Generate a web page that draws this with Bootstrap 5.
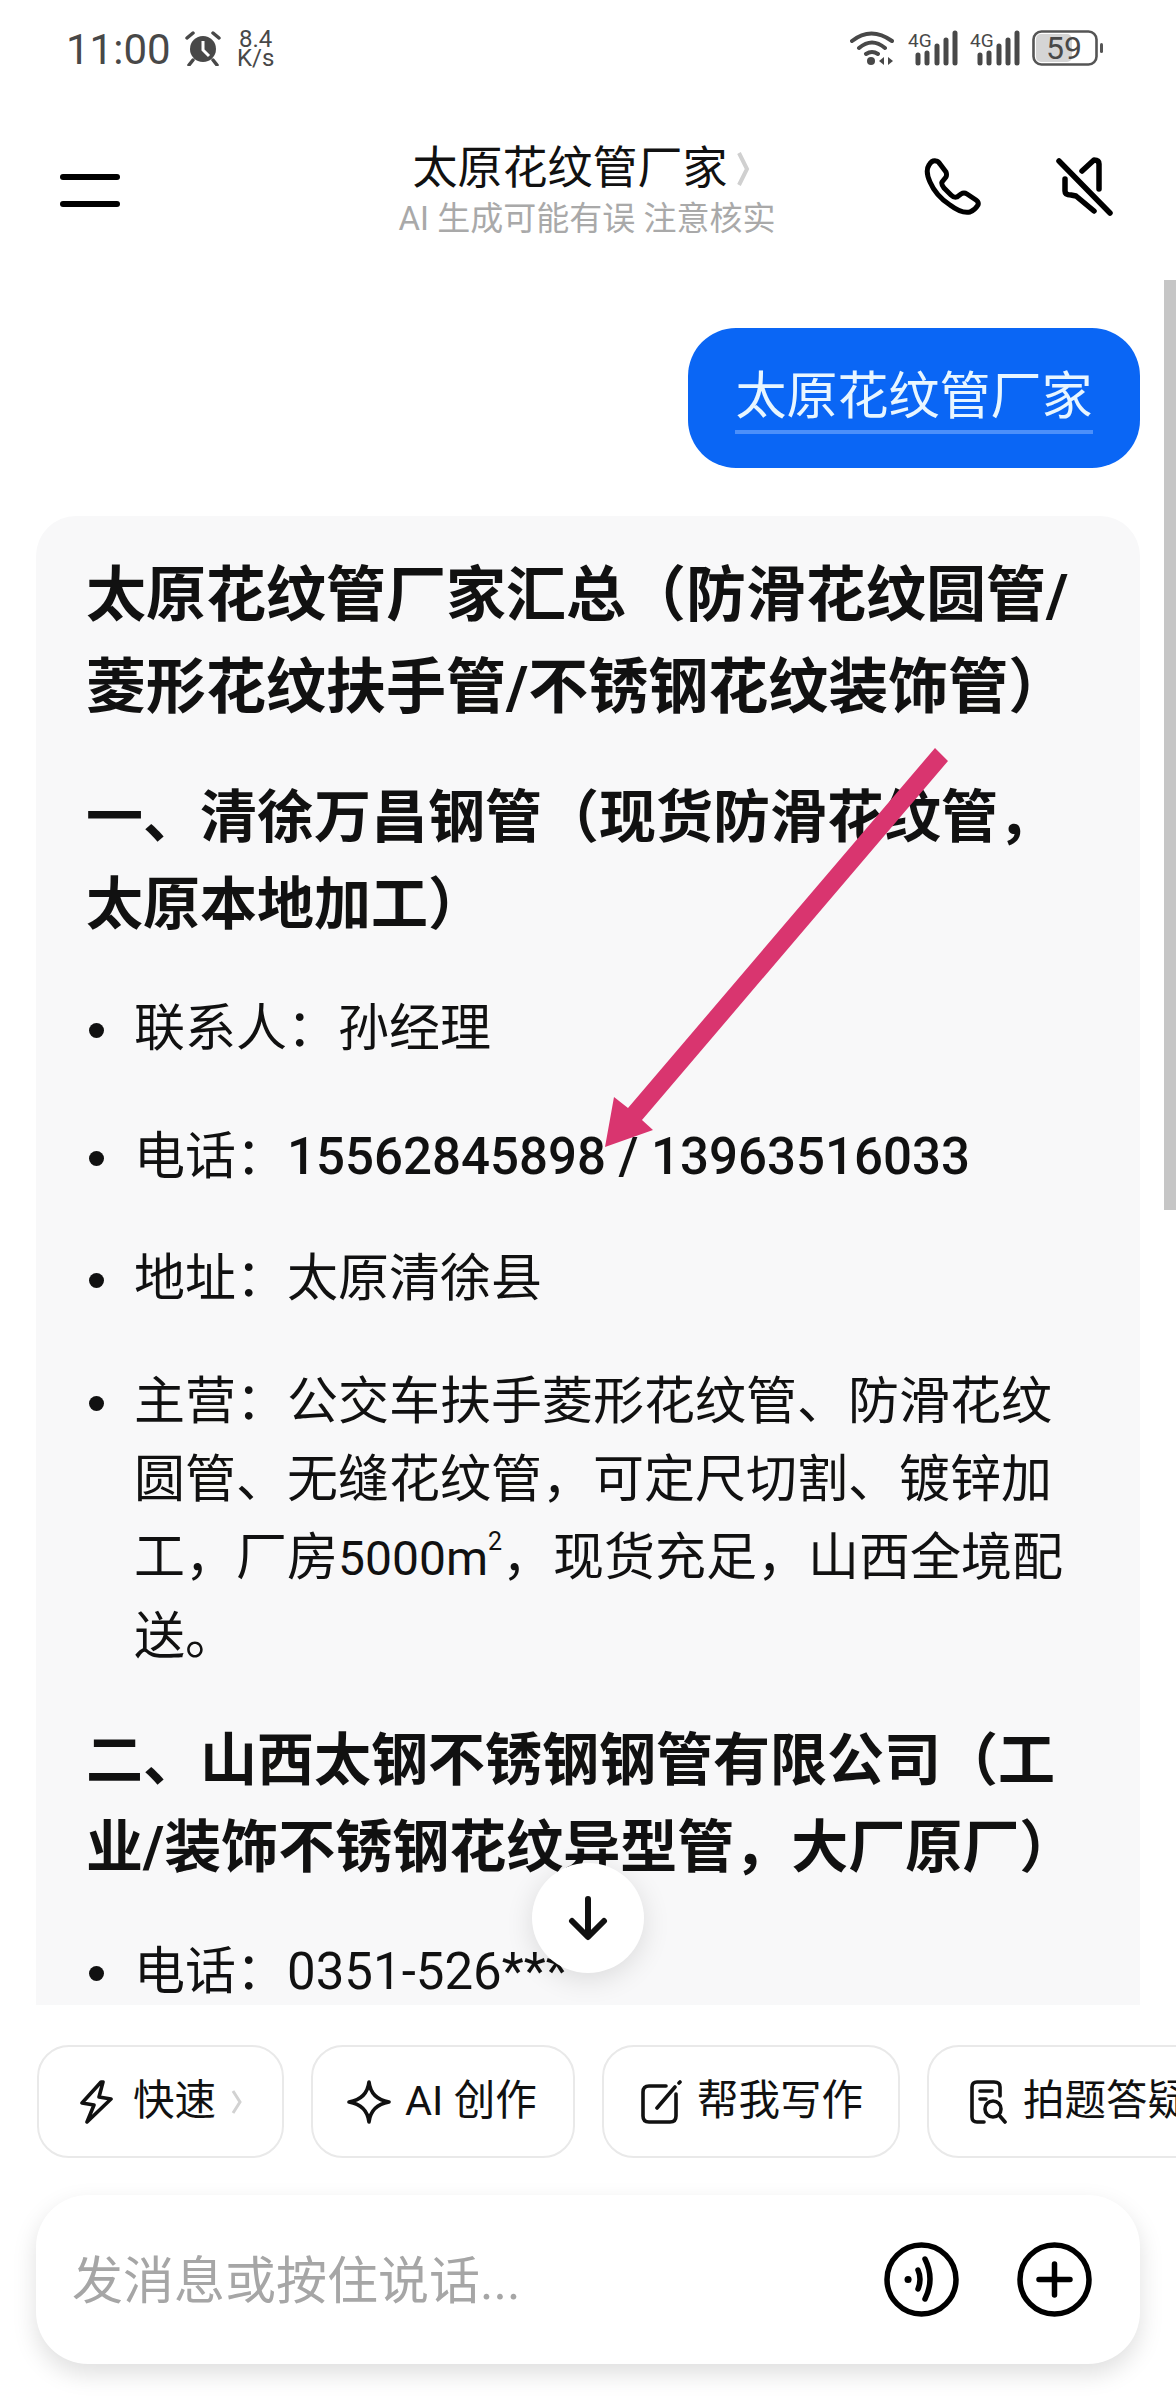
<!DOCTYPE html>
<html lang="zh-CN">
<head>
  <meta charset="UTF-8">
  <meta name="viewport" content="width=device-width, initial-scale=1.0">
  <title>太原花纹管厂家</title>
  <link rel="stylesheet" href="https://cdn.jsdelivr.net/npm/bootstrap@5.3.0/dist/css/bootstrap.min.css">
  <style>
    body {
      width: 1176px;
      height: 2400px;
      overflow: hidden;
      background: #fff;
      color: #111;
      font-family: Roboto, "Noto Sans CJK SC", sans-serif;
    }
    .status-row {
      height: 70px;
      padding: 30px 72px 0 66px;
      color: #484848;
    }
    .status-time {
      font-size: 42px;
      line-height: 40px;
      width: 119px;
    }
    .status-speed {
      font-size: 24px;
      line-height: 19px;
      margin-left: 16px;
    }
    .status-icons { gap: 12px; }
    .top-bar {
      height: 210px;
      padding: 22px 62px 0 60px;
    }
    .top-side { flex: 1 1 0; }
    .burger { width: 60px; gap: 21px; margin-top: 8px; }
    .burger i { display: block; height: 6px; border-radius: 3px; background: #000; }
    .top-text { margin-top: 6px; }
    .top-title { font-size: 45px; line-height: 60px; padding-right: 12px; }
    .top-note { font-size: 33px; line-height: 40px; color: #a9a9a9; }
    .chat-area {
      height: 1725px;
      padding: 48px 36px 0;
    }
    .scroll-thumb {
      position: absolute;
      top: 0;
      right: 0;
      width: 12px;
      height: 930px;
      background: #c6c6c6;
    }
    .user-bubble {
      width: 452px;
      height: 140px;
      margin-bottom: 48px;
      border-radius: 48px;
      background: #0a66f5;
      color: #e8f6ff;
      font-size: 51px;
    }
    .user-bubble span {
      margin-top: 3px;
      padding-bottom: 2px;
      line-height: 62px;
      border-bottom: 4px solid #4c90fa;
    }
    .answer-card {
      padding: 34px 50px 0;
      border-radius: 40px 40px 0 0;
      background: #f8f8f9;
    }
    .answer-card h1 {
      margin: 0 0 40px;
      font-size: 60px;
      line-height: 92px;
      font-weight: 700;
    }
    .answer-card h2 {
      margin: 0 0 42px;
      font-size: 57px;
      line-height: 87px;
      font-weight: 700;
    }
    .answer-card ul {
      margin: 0 0 41px;
      padding-left: 48px;
      list-style: none;
      font-size: 51px;
      line-height: 78px;
    }
    .answer-card li { position: relative; }
    .answer-card li::before {
      content: "";
      position: absolute;
      left: -45px;
      top: 33px;
      width: 15px;
      height: 15px;
      border-radius: 50%;
      background: #111;
    }
    .answer-card li + li { margin-top: 45px; }
    .answer-card li.phone-item { margin-top: 50px; }
    .answer-card li.phone-item + li { margin-top: 44px; }
    .phone-num { font-weight: 500; }
    .area-num { font-size: 48px; }
    .small-sup { font-size: 25px; top: -1em; }
    .mark-arrow {
      position: absolute;
      left: 600px;
      top: 745px;
      width: 355px;
      height: 405px;
    }
    .scroll-down {
      position: absolute;
      left: 532px;
      top: 1863px;
      width: 112px;
      height: 110px;
      box-shadow: 0 6px 28px rgba(0, 0, 0, .12);
    }
    .chip-row {
      height: 113px;
      margin-top: 40px;
      padding-left: 37px;
      gap: 27px;
    }
    .chip-btn {
      flex: none;
      height: 113px;
      border: 2px solid #e9e9e9;
      border-radius: 32px;
      background: #fff;
      font-size: 41.5px;
      white-space: nowrap;
    }
    .chip-fast { width: 247px; padding-left: 41px; gap: 20px; }
    .chip-fast svg:last-child { margin-left: -5px; }
    .chip-ai { width: 264px; padding-left: 34px; gap: 14px; }
    .chip-write { width: 298px; padding-left: 37px; gap: 14px; }
    .chip-photo { width: 330px; padding-left: 41px; gap: 15px; }
    .input-box {
      width: 1104px;
      height: 169px;
      margin: 37px 0 0 36px;
      padding: 0 48px 0 36px;
      border-radius: 52px;
      background: #fff;
      box-shadow: 0 10px 24px rgba(0, 0, 0, .13);
    }
    .input-hint { margin-top: 6px; font-size: 51px; color: #a6a6a6; }
    .input-icons { gap: 58px; }
  </style>
</head>
<body class="position-relative">

  <div class="status-row d-flex justify-content-between align-items-start">
    <div class="d-flex align-items-start">
      <span class="status-time">11:00</span>
      <svg width="36" height="36" viewBox="0 0 36 36">
        <circle cx="18" cy="19" r="13" fill="#484848"/>
        <path d="M18 11v9l6 6" stroke="#fff" stroke-width="3" fill="none"/>
        <path d="M2 8l6-5M34 8l-6-5M8 30l-4 5M28 30l4 5" stroke="#484848" stroke-width="3.5" stroke-linecap="round"/>
      </svg>
      <span class="status-speed text-center">8.4<br>K/s</span>
    </div>
    <div class="status-icons d-flex align-items-start">
      <svg width="46" height="36" viewBox="0 0 46 36" fill="none" stroke="#484848" stroke-width="4" stroke-linecap="round">
        <path d="M2 11Q21 -4 42 11M9 18Q22 7 35 18M16 24Q22 20 28 24"/>
        <circle cx="21" cy="31" r="4" fill="#484848" stroke="none"/>
        <path d="M34 27l-5 4 5 4zM38 27l5 4-5 4z" fill="#484848" stroke="none"/>
      </svg>
      <svg width="50" height="36" viewBox="0 0 50 36">
        <text x="0" y="17" font-family="Roboto, sans-serif" font-size="19" fill="#484848">4G</text>
        <path d="M10 25v8M19 23v10M29 16v17M38 10v23M47 3v30" stroke="#484848" stroke-width="5" stroke-linecap="round"/>
      </svg>
      <svg width="50" height="36" viewBox="0 0 50 36">
        <text x="0" y="17" font-family="Roboto, sans-serif" font-size="19" fill="#484848">4G</text>
        <path d="M10 25v8M19 23v10M29 16v17M38 10v23M47 3v30" stroke="#484848" stroke-width="5" stroke-linecap="round"/>
      </svg>
      <svg width="72" height="40" viewBox="0 0 72 40">
        <rect x="4" y="4" width="36" height="28" rx="5" fill="#d5d5d5"/>
        <rect x="1.5" y="1.5" width="63" height="33" rx="8" fill="none" stroke="#555" stroke-width="2.6"/>
        <text x="32" y="29" text-anchor="middle" font-family="Roboto, sans-serif" font-size="32" fill="#484848">59</text>
        <rect x="68" y="13" width="3" height="10" rx="1.5" fill="#555"/>
      </svg>
    </div>
  </div>

  <div class="top-bar d-flex align-items-center">
    <div class="top-side">
      <div class="burger d-flex flex-column"><i></i><i></i></div>
    </div>
    <div class="top-text text-center">
      <div class="top-title d-flex align-items-center justify-content-center gap-2">
        <span>太原花纹管厂家</span>
        <svg width="14" height="36" viewBox="0 0 14 36" fill="none" stroke="#d0d0d0" stroke-width="4"><path d="M3 2l8 16-8 16"/></svg>
      </div>
      <div class="top-note">AI 生成可能有误 注意核实</div>
    </div>
    <div class="top-side d-flex justify-content-end align-items-center">
      <svg class="me-5" width="58" height="58" viewBox="0 0 58 58" fill="none" stroke="#000" stroke-width="5" stroke-linejoin="round">
        <path d="M12 4Q8 3 5 8Q1 14 6 25Q12 39 26 48Q38 57 46 55Q51 53 54 48Q55 45 52 43L43 37Q40 35 37 37L33 40Q30 41 27 38L20 31Q17 27 18 25L22 20Q23 18 22 15L16 7Q14 4 12 4Z"/>
      </svg>
      <svg class="ms-4" width="60" height="60" viewBox="0 0 60 60" fill="none" stroke="#000" stroke-width="5.5" stroke-linecap="round" stroke-linejoin="round">
        <path d="M5 5L56 57M28 15L40 4Q45 4 45 8V33M11 23V35Q11 39 17 39L22 40L40 55"/>
      </svg>
    </div>
  </div>

  <div class="chat-area position-relative overflow-hidden">
    <div class="scroll-thumb"></div>
    <div class="d-flex justify-content-end">
      <div class="user-bubble d-flex align-items-center justify-content-center"><span>太原花纹管厂家</span></div>
    </div>
    <div class="answer-card">
      <h1>太原花纹管厂家汇总（防滑花纹圆管/菱形花纹扶手管/不锈钢花纹装饰管）</h1>
      <h2>一、清徐万昌钢管（现货防滑花纹管，太原本地加工）</h2>
      <ul>
        <li>联系人：孙经理</li>
        <li class="phone-item">电话：<span class="phone-num">15562845898 / 13963516033</span></li>
        <li>地址：太原清徐县</li>
        <li>主营：公交车扶手菱形花纹管、防滑花纹圆管、无缝花纹管，可定尺切割、镀锌加工，厂房<span class="area-num">5000m</span><sup class="small-sup">2</sup>，现货充足，山西全境配送。</li>
      </ul>
      <h2>二、山西太钢不锈钢钢管有限公司（工业/装饰不锈钢花纹异型管，大厂原厂）</h2>
      <ul>
        <li>电话：0351-526***</li>
      </ul>
    </div>
  </div>

  <svg class="mark-arrow" viewBox="600 745 355 405">
    <polygon points="935,748 948,761 642,1120 653,1130 605,1147 614,1097 628,1108" fill="#d9356f"/>
  </svg>

  <div class="scroll-down rounded-circle bg-white d-flex align-items-center justify-content-center">
    <svg width="40" height="46" viewBox="0 0 40 46" fill="none" stroke="#111" stroke-width="6" stroke-linecap="round" stroke-linejoin="round">
      <path d="M20 4V41M4 26L20 42L36 26"/>
    </svg>
  </div>

  <div class="chip-row d-flex overflow-hidden">
    <div class="chip-btn chip-fast d-flex align-items-center">
      <svg width="33" height="44" viewBox="0 0 33 44" fill="none" stroke="#111" stroke-width="3.6" stroke-linejoin="round">
        <path d="M21 2L2 23L14 25L7 42L31 19L19 17L23 2Z"/>
      </svg>
      <span>快速</span>
      <svg width="11" height="26" viewBox="0 0 11 26" fill="none" stroke="#d2d2d2" stroke-width="3"><path d="M2 2l7 11-7 11"/></svg>
    </div>
    <div class="chip-btn chip-ai d-flex align-items-center">
      <svg width="44" height="44" viewBox="0 0 44 44" fill="none" stroke="#111" stroke-width="3.6" stroke-linejoin="round">
        <path d="M22 2Q24 19 42 22Q24 25 22 42Q20 25 2 22Q20 19 22 2Z"/>
      </svg>
      <span>AI 创作</span>
    </div>
    <div class="chip-btn chip-write d-flex align-items-center">
      <svg width="42" height="44" viewBox="0 0 42 44" fill="none" stroke="#111" stroke-width="3.6" stroke-linecap="round">
        <path d="M25 6H8Q2 6 2 12V36Q2 42 8 42H29Q35 42 35 36V14M16 28L34 7M38 3L39 2"/>
      </svg>
      <span>帮我写作</span>
    </div>
    <div class="chip-btn chip-photo d-flex align-items-center">
      <svg width="38" height="44" viewBox="0 0 38 44" fill="none" stroke="#111" stroke-width="3.6" stroke-linecap="round">
        <path d="M14 42H7Q2 42 2 37V7Q2 2 7 2H24Q30 2 30 7V16M10 11H22M10 19H16"/>
        <circle cx="23" cy="29" r="8"/>
        <path d="M29 35L35 42"/>
      </svg>
      <span>拍题答疑</span>
    </div>
  </div>

  <div class="input-box d-flex align-items-center justify-content-between">
    <span class="input-hint">发消息或按住说话...</span>
    <div class="input-icons d-flex align-items-center">
      <svg width="75" height="75" viewBox="0 0 75 75" fill="none" stroke="#000" stroke-width="5.5" stroke-linecap="round">
        <circle cx="37.5" cy="37.5" r="34.5"/>
        <path d="M24 37.5h.1" stroke-width="7"/>
        <path d="M34 28Q38 37 34 47"/>
        <path d="M41 17Q51 37 41 57"/>
      </svg>
      <svg width="75" height="75" viewBox="0 0 75 75" fill="none" stroke="#000" stroke-width="5.5" stroke-linecap="round">
        <circle cx="37.5" cy="37.5" r="34.5"/>
        <path d="M37.5 22V53M22 37.5H53"/>
      </svg>
    </div>
  </div>

  <script src="https://cdn.jsdelivr.net/npm/bootstrap@5.3.0/dist/js/bootstrap.bundle.min.js"></script>
</body>
</html>
